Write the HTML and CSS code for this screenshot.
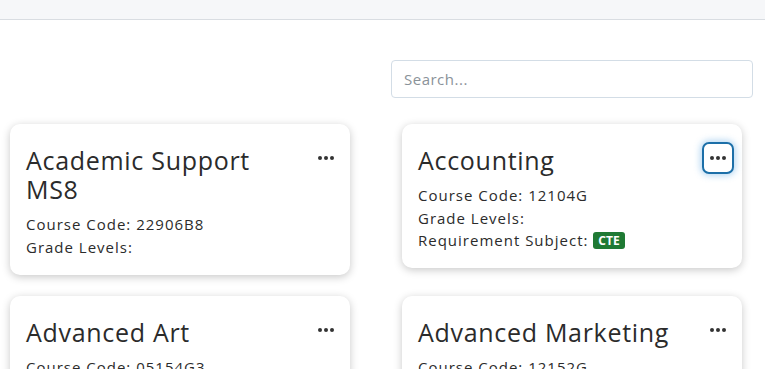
FILE: index.html
```html
<!DOCTYPE html>
<html lang="en">
<head>
    <meta charset="UTF-8">
    <meta name="viewport" content="width=device-width, initial-scale=1.0">
    <title>Courses</title>
    <link rel="stylesheet" href="styles.css">
</head>
<body>
    <!-- top bar -->
    <header class="topbar"></header>

    <main class="page">
        <div class="toolbar">
            <input class="search" type="text" placeholder="Search...">
        </div>

        <div class="course-grid">
            <div class="course-card">
                <div class="card-head">
                    <h2>Academic Support MS8</h2>
                    <button class="more-btn"><span></span><span></span><span></span></button>
                </div>
                <p>Course Code: 22906B8</p>
                <p>Grade Levels:</p>
            </div>

            <div class="course-card">
                <div class="card-head">
                    <h2>Accounting</h2>
                    <button class="more-btn focused"><span></span><span></span><span></span></button>
                </div>
                <p>Course Code: 12104G</p>
                <p>Grade Levels:</p>
                <p>Requirement Subject: <span class="badge">CTE</span></p>
            </div>

            <div class="course-card">
                <div class="card-head">
                    <h2>Advanced Art</h2>
                    <button class="more-btn"><span></span><span></span><span></span></button>
                </div>
                <p>Course Code: 05154G3</p>
                <p>Grade Levels:</p>
            </div>

            <div class="course-card">
                <div class="card-head">
                    <h2>Advanced Marketing</h2>
                    <button class="more-btn"><span></span><span></span><span></span></button>
                </div>
                <p>Course Code: 12152G</p>
                <p>Grade Levels:</p>
            </div>
        </div>
    </main>
</body>
</html>
```

FILE: styles.css
```css
* {
    margin: 0;
    padding: 0;
    box-sizing: border-box;
}
body {
    background: #fff;
    color: #2b2b2b;
    font-family: 'Open Sans', sans-serif;
    height: 369px;
    overflow: hidden;
}
.topbar {
    height: 20px;
    background: #f6f7f9;
    border-bottom: 1px solid #d9dde2;
}
.toolbar {
    display: flex;
    justify-content: flex-end;
    padding: 40px 12px 0 0;
}
.search {
    width: 362px;
    height: 38px;
    border: 1px solid #d3dde6;
    border-radius: 4px;
    padding: 0 12px;
    font-family: inherit;
    font-size: 15px;
    letter-spacing: 0.5px;
    color: #333;
    outline: none;
}
.search::placeholder {
    color: #8a9299;
}
.course-grid {
    display: grid;
    grid-template-columns: 340px 340px;
    column-gap: 52px;
    row-gap: 21px;
    align-items: start;
    padding: 26px 0 0 10px;
}
.course-card {
    background: #fff;
    border-radius: 10px;
    box-shadow: 0 2px 8px rgba(0, 0, 0, 0.22);
    padding: 22px 16px 16px 16px;
    min-height: 143px;
}
.course-card:first-child {
    min-height: 151px;
}
.card-head {
    display: flex;
    justify-content: space-between;
    align-items: flex-start;
    margin-bottom: 9px;
}
.card-head h2 {
    font-size: 25px;
    font-weight: 400;
    line-height: 29px;
    letter-spacing: 0.7px;
    max-width: 260px;
}
.course-card p {
    font-size: 15px;
    line-height: 22.5px;
    letter-spacing: 1px;
}
.more-btn {
    display: flex;
    gap: 2px;
    align-items: center;
    justify-content: center;
    width: 32px;
    height: 32px;
    margin: -4px -8px 0 0;
    border: 2px solid transparent;
    border-radius: 7px;
    background: #fff;
    cursor: pointer;
}
.more-btn span {
    width: 4px;
    height: 4px;
    border-radius: 50%;
    background: #333;
}
.more-btn.focused {
    border-color: #1c6fa8;
    box-shadow: 0 0 6px 2px rgba(60, 150, 220, 0.35);
}
.badge {
    display: inline-block;
    background: #1f7a34;
    color: #fff;
    font-size: 12px;
    font-weight: 700;
    line-height: 17px;
    letter-spacing: 0;
    padding: 0 5px;
    border-radius: 3px;
    vertical-align: 1px;
}
```
